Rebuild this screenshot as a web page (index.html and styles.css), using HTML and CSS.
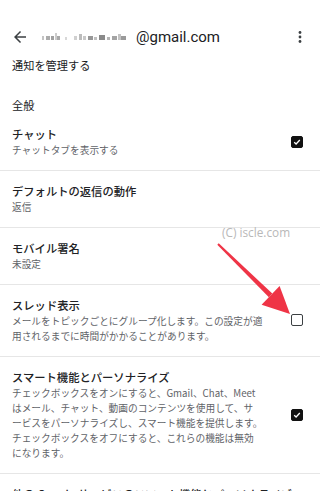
FILE: index.html
```html
<!DOCTYPE html>
<html lang="ja">
<head>
<meta charset="utf-8">
<title>通知を管理する</title>
<link rel="stylesheet" href="styles.css">
</head>
<body>
<div class="page">
  <header class="topbar">
    <svg class="back" width="18" height="18" viewBox="0 0 24 24"><path d="M20 11H7.83l5.59-5.59L12 4l-8 8 8 8 1.41-1.41L7.83 13H20v-2z" fill="#3c4043"/></svg>
    <div class="account">
      <svg class="redacted" width="94" height="10" viewBox="0 0 94 10">
        <rect x="1" y="4" width="2" height="4" fill="#c4c4c4"/>
        <rect x="5" y="4" width="4" height="4" fill="#acacac"/>
        <rect x="10" y="4" width="3" height="4" fill="#a0a0a0"/>
        <rect x="14" y="1" width="2" height="7" fill="#cccccc"/>
        <rect x="16" y="4" width="3" height="4" fill="#a8a8a8"/>
        <rect x="24" y="5" width="2" height="3" fill="#d8d8d8"/>
        <rect x="33" y="4" width="3" height="4" fill="#d0d0d0"/>
        <rect x="38" y="2" width="3" height="6" fill="#bcbcbc"/>
        <rect x="42" y="4" width="3" height="4" fill="#c8c8c8"/>
        <rect x="47" y="4" width="5" height="4" fill="#989898"/>
        <rect x="53" y="5" width="3" height="3" fill="#c0c0c0"/>
        <rect x="58" y="3" width="6" height="5" fill="#8a8a8a"/>
        <rect x="66" y="5" width="3" height="3" fill="#b4b4b4"/>
        <rect x="71" y="4" width="5" height="4" fill="#a4a4a4"/>
        <rect x="77" y="2" width="3" height="6" fill="#c4c4c4"/>
        <rect x="80" y="4" width="5" height="4" fill="#9a9a9a"/>
      </svg>
      <span class="domain">@gmail.com</span>
    </div>
    <svg class="more" width="6" height="14" viewBox="0 0 6 14"><circle cx="3" cy="2.5" r="1.4" fill="#3c4043"/><circle cx="3" cy="7" r="1.4" fill="#3c4043"/><circle cx="3" cy="11.5" r="1.4" fill="#3c4043"/></svg>
  </header>

  <div class="manage">通知を管理する</div>
  <div class="section">全般</div>

  <div class="item">
    <div class="text">
      <div class="title">チャット</div>
      <div class="desc">チャットタブを表示する</div>
    </div>
    <span class="cb checked"><svg width="8" height="8" viewBox="0 0 8 8"><path d="M1.2 4.2 3.1 6 6.8 2" fill="none" stroke="#fff" stroke-width="1.3"/></svg></span>
  </div>

  <div class="item">
    <div class="text">
      <div class="title">デフォルトの返信の動作</div>
      <div class="desc">返信</div>
    </div>
  </div>

  <div class="item">
    <div class="text">
      <div class="title">モバイル署名</div>
      <div class="desc">未設定</div>
    </div>
  </div>

  <div class="item">
    <div class="text">
      <div class="title">スレッド表示</div>
      <div class="desc">メールをトピックごとにグループ化します。この設定が適<br>用されるまでに時間がかかることがあります。</div>
    </div>
    <span class="cb"></span>
  </div>

  <div class="item">
    <div class="text">
      <div class="title">スマート機能とパーソナライズ</div>
      <div class="desc">チェックボックスをオンにすると、Gmail、Chat、Meet<br>はメール、チャット、動画のコンテンツを使用して、サ<br>ービスをパーソナライズし、スマート機能を提供します。<br>チェックボックスをオフにすると、これらの機能は無効<br>になります。</div>
    </div>
    <span class="cb checked"><svg width="8" height="8" viewBox="0 0 8 8"><path d="M1.2 4.2 3.1 6 6.8 2" fill="none" stroke="#fff" stroke-width="1.3"/></svg></span>
  </div>

  <div class="item">
    <div class="text">
      <div class="title">他の Google サービスのスマート機能とパーソナライズ</div>
      <div class="desc">&nbsp;</div>
    </div>
  </div>

  <div class="watermark">(C) iscle.com</div>
  <svg class="arrow" width="320" height="491" viewBox="0 0 320 491">
    <polygon points="217.3,244.7 218.7,243.3 272.3,293.6 268.9,297.2" fill="#ef3446"/>
    <polygon points="290,314 261.6,304.8 279.6,286" fill="#ef3446"/>
  </svg>
</div>
</body>
</html>
```

FILE: styles.css
```css
html, body {
  margin: 0;
  padding: 0;
  background: #ffffff;
}

.page {
  position: relative;
  width: 320px;
  height: 491px;
  overflow: hidden;
  font-family: "Noto Sans CJK JP", "Noto Sans", sans-serif;
  color: #202124;
}

.topbar {
  display: flex;
  align-items: center;
  height: 24px;
  margin-top: 25px;
  padding: 0 17px 0 11px;
}

.back {
  flex: none;
}

.account {
  flex: 1;
  display: flex;
  align-items: center;
  margin-left: 12px;
}

.redacted {
  flex: none;
  margin-right: 1px;
}

.domain {
  font-family: Roboto, "Liberation Sans", sans-serif;
  font-size: 15px;
  color: #202124;
}

.more {
  flex: none;
}

.manage {
  margin-top: 7px;
  padding-left: 12px;
  font-size: 11.2px;
  line-height: 18px;
}

.section {
  margin-top: 22px;
  padding-left: 12px;
  font-size: 11.2px;
  line-height: 18px;
}

.item {
  display: flex;
  align-items: center;
  padding: 11px 17px 12px 12px;
  border-bottom: 1px solid #e6e6e6;
}

.text {
  flex: 1;
  min-width: 0;
}

.title {
  font-size: 11.3px;
  line-height: 18px;
  font-weight: 500;
  color: #202124;
  white-space: nowrap;
}

.desc {
  font-size: 9.7px;
  line-height: 15px;
  color: #5f6368;
  white-space: nowrap;
}

.cb {
  flex: none;
  box-sizing: border-box;
  width: 12px;
  height: 12px;
  border: 1.5px solid #3c4043;
  border-radius: 2px;
  display: flex;
  align-items: center;
  justify-content: center;
}

.cb.checked {
  background: #111111;
  border-color: #111111;
}

.watermark {
  position: absolute;
  left: 222px;
  top: 224px;
  font-family: "Open Sans", "Noto Sans", sans-serif;
  font-size: 11.8px;
  line-height: 16px;
  color: #b8b8b8;
}

.arrow {
  position: absolute;
  left: 0;
  top: 0;
  pointer-events: none;
}
```
